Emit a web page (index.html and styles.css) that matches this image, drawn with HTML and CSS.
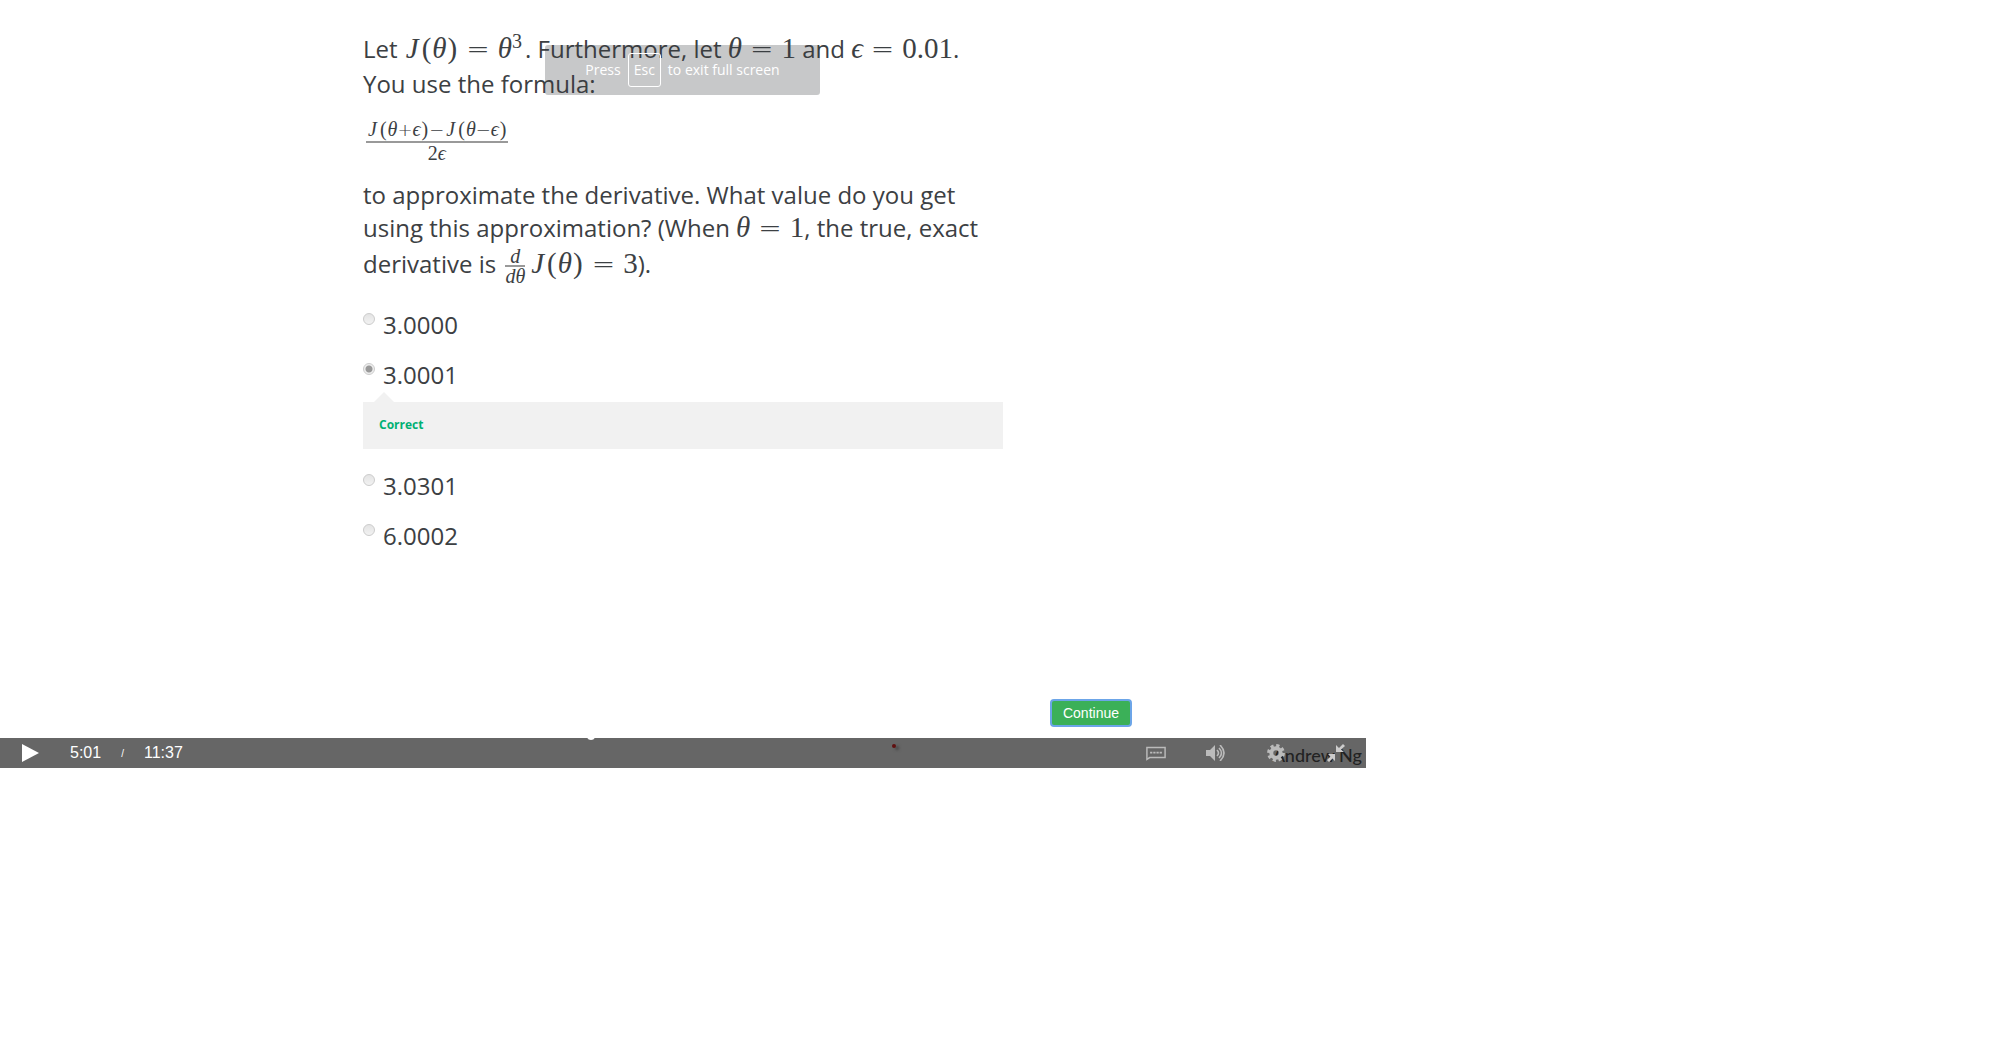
FILE: index.html
```html
<!DOCTYPE html>
<html lang="en">
<head>
<meta charset="utf-8">
<title>Gradient checking quiz</title>
<link rel="stylesheet" href="styles.css">
</head>
<body>
<main class="player">
  <form class="quiz">
    <p class="prompt prompt-intro">Let <span class="math"><i class="fn">J</i><span class="paren">(</span><i>θ</i><span class="paren">)</span><span class="rel">=</span><i>θ</i><sup>3</sup></span>. Furthermore, let <span class="math"><i>θ</i><span class="rel">=</span>1</span> and <span class="math"><i class="eps">ϵ</i><span class="rel">=</span>0.01</span>. You use the formula:</p>
    <p class="formula"><span class="frac"><span class="num"><i class="fn">J</i><span class="paren">(</span><i>θ</i><span class="op">+</span><i class="eps">ϵ</i><span class="paren">)</span><span class="op">−</span><i class="fn">J</i><span class="paren">(</span><i>θ</i><span class="op">−</span><i class="eps">ϵ</i><span class="paren">)</span></span><span class="den">2<i class="eps">ϵ</i></span></span></p>
    <p class="prompt">to approximate the derivative. What value do you get using this approximation? (When <span class="math"><i>θ</i><span class="rel">=</span>1</span>, the true, exact derivative is <span class="math"><span class="frac frac-inline"><span class="num"><i>d</i></span><span class="den"><i>dθ</i></span></span><i class="fn">J</i><span class="paren">(</span><i>θ</i><span class="paren">)</span><span class="rel">=</span>3</span>).</p>
    <div class="options">
      <label class="option"><input type="radio" name="answer"><span>3.0000</span></label>
      <label class="option"><input type="radio" name="answer" checked><span>3.0001</span></label>
      <div class="feedback">Correct</div>
      <label class="option"><input type="radio" name="answer"><span>3.0301</span></label>
      <label class="option"><input type="radio" name="answer"><span>6.0002</span></label>
    </div>
  </form>
  <div class="actions"><button class="continue" type="button">Continue</button></div>
  <div class="controls">
    <span class="knob"></span>
    <span class="pointer"></span>
    <span class="lecturer">Andrew Ng</span>
    <button class="icon play" type="button" aria-label="Play"><svg width="18" height="18" viewBox="0 0 18 18"><path d="M0 0L17 9L0 18Z" fill="#fff"/></svg></button>
    <span class="time">5:01</span>
    <span class="slash">/</span>
    <span class="time">11:37</span>
    <div class="tools">
      <button class="icon" type="button" aria-label="Subtitles"><svg width="22" height="16" viewBox="0 0 22 16"><path d="M1 15V2H21V13H4Z" fill="none" stroke="#bbb" stroke-width="1.6"/><path d="M4.500 7.500H18" stroke="#bbb" stroke-width="2" stroke-dasharray="2.500 1"/></svg></button>
      <button class="icon" type="button" aria-label="Volume"><svg width="20" height="16" viewBox="0 0 20 16"><path d="M0 5H4L9 0V16L4 11H0Z" fill="#bbb"/><path d="M11 5Q14 8 11 11M13 3Q18 8 13 13M14 0Q22 8 14 16" fill="none" stroke="#bbb" stroke-width="1.6"/></svg></button>
      <button class="icon" type="button" aria-label="Settings"><svg width="18" height="18" viewBox="0 0 18 18"><circle cx="9" cy="9" r="4.7" fill="none" stroke="#bbb" stroke-width="4"/><circle cx="9" cy="9" r="7.4" fill="none" stroke="#bbb" stroke-width="3" stroke-dasharray="3.2 2.61"/></svg></button>
      <button class="icon" type="button" aria-label="Exit full screen"><svg width="18" height="18" viewBox="0 0 18 18"><path d="M9 1V8H17L14 5.500L18 2L16 0L12 4Z M8 17V10H1L3.500 12.500L0 16L2 18L5.500 14.500Z" fill="#ccc"/></svg></button>
    </div>
  </div>
  <div class="toast">Press <kbd>Esc</kbd> to exit full screen</div>
</main>
</body>
</html>
```
FILE: styles.css
```css
* { box-sizing: border-box; }
body { margin: 0; background: #fff; color: #3c4043; font-family: "Open Sans", sans-serif; }
p { margin: 0; }

/* Video frame with the quiz laid over it */
.player { position: relative; width: 68.3%; }
.quiz { max-width: 640px; margin: 0 auto; padding-top: 31px; font-size: 24px; }
.prompt { line-height: 33px; }
.prompt-intro { line-height: 35px; }

/* Formulas */
.math, .formula { font-family: "Liberation Serif", serif; white-space: nowrap; }
.math { font-size: 29px; line-height: 1; }
.math sup { margin-right: 3px; font-size: 20px; line-height: 0; vertical-align: 10px; }
.fn { margin: 0 2px; }
.paren { padding: 0 1px; }
.rel { margin: 0 8px; font-family: "DejaVu Sans", sans-serif; font-weight: 200; font-size: 28px; line-height: 1; }
.formula { padding: 17px 3px 15px; font-size: 20px; line-height: 22px; }
.frac { display: inline-flex; flex-direction: column; align-items: stretch; text-align: center; }
.num { border-bottom: 2px solid #999; }
.den { line-height: 20px; }
.op { font-family: "DejaVu Sans", sans-serif; font-weight: 200; font-size: 18px; }
.frac-inline { margin: 0 4px 0 3px; padding-top: 3px; font-size: 20px; line-height: 18px; vertical-align: 10px; }
.frac-inline .den { line-height: 18px; }

/* Answers */
.options { padding-top: 15px; }
.option { display: flex; gap: 8px; height: 50px; padding-top: 8px; line-height: 33px; }
.option input { appearance: none; width: 12px; height: 12px; margin: 5px 0 0; border: 1px solid #ccc; border-radius: 50%; background: linear-gradient(#e4e4e4, #f2f2f2); }
.option input:checked { background: radial-gradient(circle, #999 0 3px, #eee 4px); }
.feedback { position: relative; height: 47px; margin: 2px 0 12px; padding: 0 16px; background: #f1f1f1; color: #00b073; font-size: 12px; font-weight: 700; line-height: 45px; }
.feedback::before { content: ""; position: absolute; left: 11px; top: -10px; border: solid transparent; border-width: 0 10px 10px; border-bottom-color: #f1f1f1; }

.actions { display: flex; justify-content: flex-end; padding: 138px 234px 11px 0; }
.continue { width: 82px; height: 28px; padding: 0; border: 2px solid #6ca5e8; border-radius: 4px; background: #3bb058; color: #fff; font: 14px "Liberation Sans", sans-serif; }

/* Control bar */
.controls { position: relative; display: flex; align-items: center; height: 30px; padding: 0 20px 0 21px; background: #666; color: #fff; font-family: "Liberation Sans", sans-serif; overflow: hidden; }
.icon { display: flex; align-items: center; justify-content: center; width: 20px; padding: 0; border: 0; background: none; }
.play { margin-right: 29px; }
.time { font-size: 16px; }
.slash { margin: 0 20px; font-size: 10px; }
.tools { position: relative; display: flex; gap: 40px; margin-left: auto; }
.knob { position: absolute; left: 587px; top: -6px; width: 8px; height: 8px; border-radius: 50%; background: #fff; }
.pointer { position: absolute; left: 892px; top: 6px; width: 4px; height: 4px; border-radius: 50%; background: #601010; box-shadow: 3px 2px 3px #444; }
.lecturer { position: absolute; right: 4px; top: 5px; color: #222; font: 500 18px/24px "Lato", sans-serif; }

.toast { position: absolute; left: 50%; top: 45px; display: flex; align-items: center; justify-content: center; gap: 7px; width: 275px; height: 50px; margin-left: -138px; border-radius: 3px; background: rgba(55, 58, 62, 0.28); color: #fff; font: 14px/18px "Open Sans", sans-serif; white-space: nowrap; }
.toast kbd { padding: 7px 5px; border: 1px solid #fff; border-radius: 3px; font: inherit; }
```
